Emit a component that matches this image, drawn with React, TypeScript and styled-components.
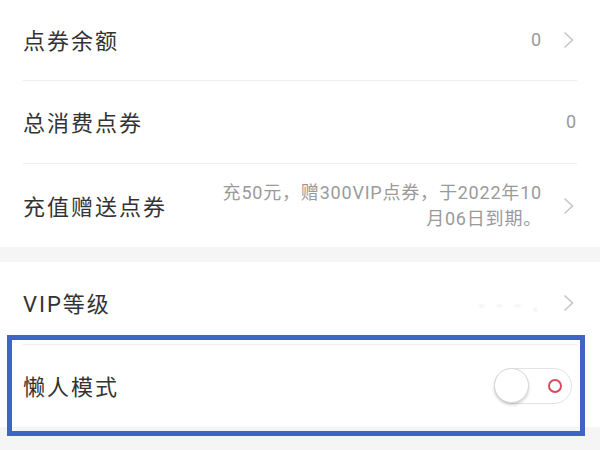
import React from 'react';
import styled, { createGlobalStyle } from 'styled-components';

const GlobalStyle = createGlobalStyle`
  html, body {
    margin: 0;
    padding: 0;
    background: #f5f5f5;
  }
  body {
    font-family: 'Noto Sans CJK SC', 'Noto Sans', sans-serif;
  }
`;

const Page = styled.div`
  position: relative;
  width: 600px;
  height: 450px;
  overflow: hidden;
  background: #f5f5f5;
`;

const Group = styled.section`
  background: #ffffff;
`;

const Gap = styled.div`
  height: 15px;
  background: #f5f5f5;
`;

const Row = styled.div<{ $h: number }>`
  display: flex;
  align-items: center;
  justify-content: space-between;
  height: ${(p) => p.$h}px;
  padding: 0 23px;
`;

const Divider = styled.div`
  height: 1px;
  margin: 0 23px;
  background: #eeeeee;
`;

const Label = styled.span`
  font-family: Roboto, 'Noto Sans CJK SC', sans-serif;
  font-size: 22px;
  letter-spacing: 2px;
  color: #333333;
  margin-top: -2px;
`;

const Right = styled.div`
  display: flex;
  align-items: center;
  gap: 21px;
`;

const Value = styled.span`
  font-family: Roboto, 'Noto Sans CJK SC', sans-serif;
  font-size: 18px;
  letter-spacing: 0.8px;
  line-height: 26px;
  color: #9a9a9a;
  text-align: right;
`;

const Hidden = styled.span`
  font-size: 18px;
  color: #e2e2e2;
  filter: blur(1.2px);
  letter-spacing: 4px;
`;

const ChevronBox = styled.svg`
  display: block;
  flex: none;
`;

const Chevron = () => (
  <ChevronBox width="14" height="18" viewBox="0 0 14 18">
    <path d="M1.5 1.5 L9.5 9 L1.5 16.5" fill="none" stroke="#c4c4c4" strokeWidth="1.5" />
  </ChevronBox>
);

const Switch = styled.div`
  position: relative;
  width: 78px;
  height: 36px;
  margin-right: 5px;
  box-sizing: border-box;
  border: 1px solid #e3e3e3;
  border-radius: 18px;
  background: #ffffff;
`;

const Knob = styled.div`
  position: absolute;
  left: -1px;
  top: -1px;
  width: 35px;
  height: 35px;
  box-sizing: border-box;
  border-radius: 50%;
  border: 1px solid #d8d8d8;
  background: #ffffff;
  box-shadow: 0 2px 3px rgba(0, 0, 0, 0.18);
`;

const OffRing = styled.div`
  position: absolute;
  right: 9px;
  top: 10px;
  width: 14px;
  height: 14px;
  box-sizing: border-box;
  border-radius: 50%;
  border: 2px solid #d84a5a;
`;

const Highlight = styled.div`
  position: absolute;
  left: 7px;
  top: 335px;
  width: 578px;
  height: 101px;
  box-sizing: border-box;
  border: 5px solid #4063c6;
  pointer-events: none;
`;

export default function App() {
  return (
    <Page>
      <GlobalStyle />
      <Group>
        <Row $h={80}>
          <Label>点券余额</Label>
          <Right>
            <Value>0</Value>
            <Chevron />
          </Right>
        </Row>
        <Divider />
        <Row $h={82}>
          <Label>总消费点券</Label>
          <Value>0</Value>
        </Row>
        <Divider />
        <Row $h={83}>
          <Label>充值赠送点券</Label>
          <Right>
            <Value>
              充50元，赠300VIP点券，于2022年10
              <br />
              月06日到期。
            </Value>
            <Chevron />
          </Right>
        </Row>
      </Group>
      <Gap />
      <Group>
        <Row $h={82}>
          <Label>VIP等级</Label>
          <Right>
            <Hidden>- - - .</Hidden>
            <Chevron />
          </Right>
        </Row>
        <Divider />
        <Row $h={82}>
          <Label>懒人模式</Label>
          <Switch>
            <Knob />
            <OffRing />
          </Switch>
        </Row>
      </Group>
      <Highlight />
    </Page>
  );
}
